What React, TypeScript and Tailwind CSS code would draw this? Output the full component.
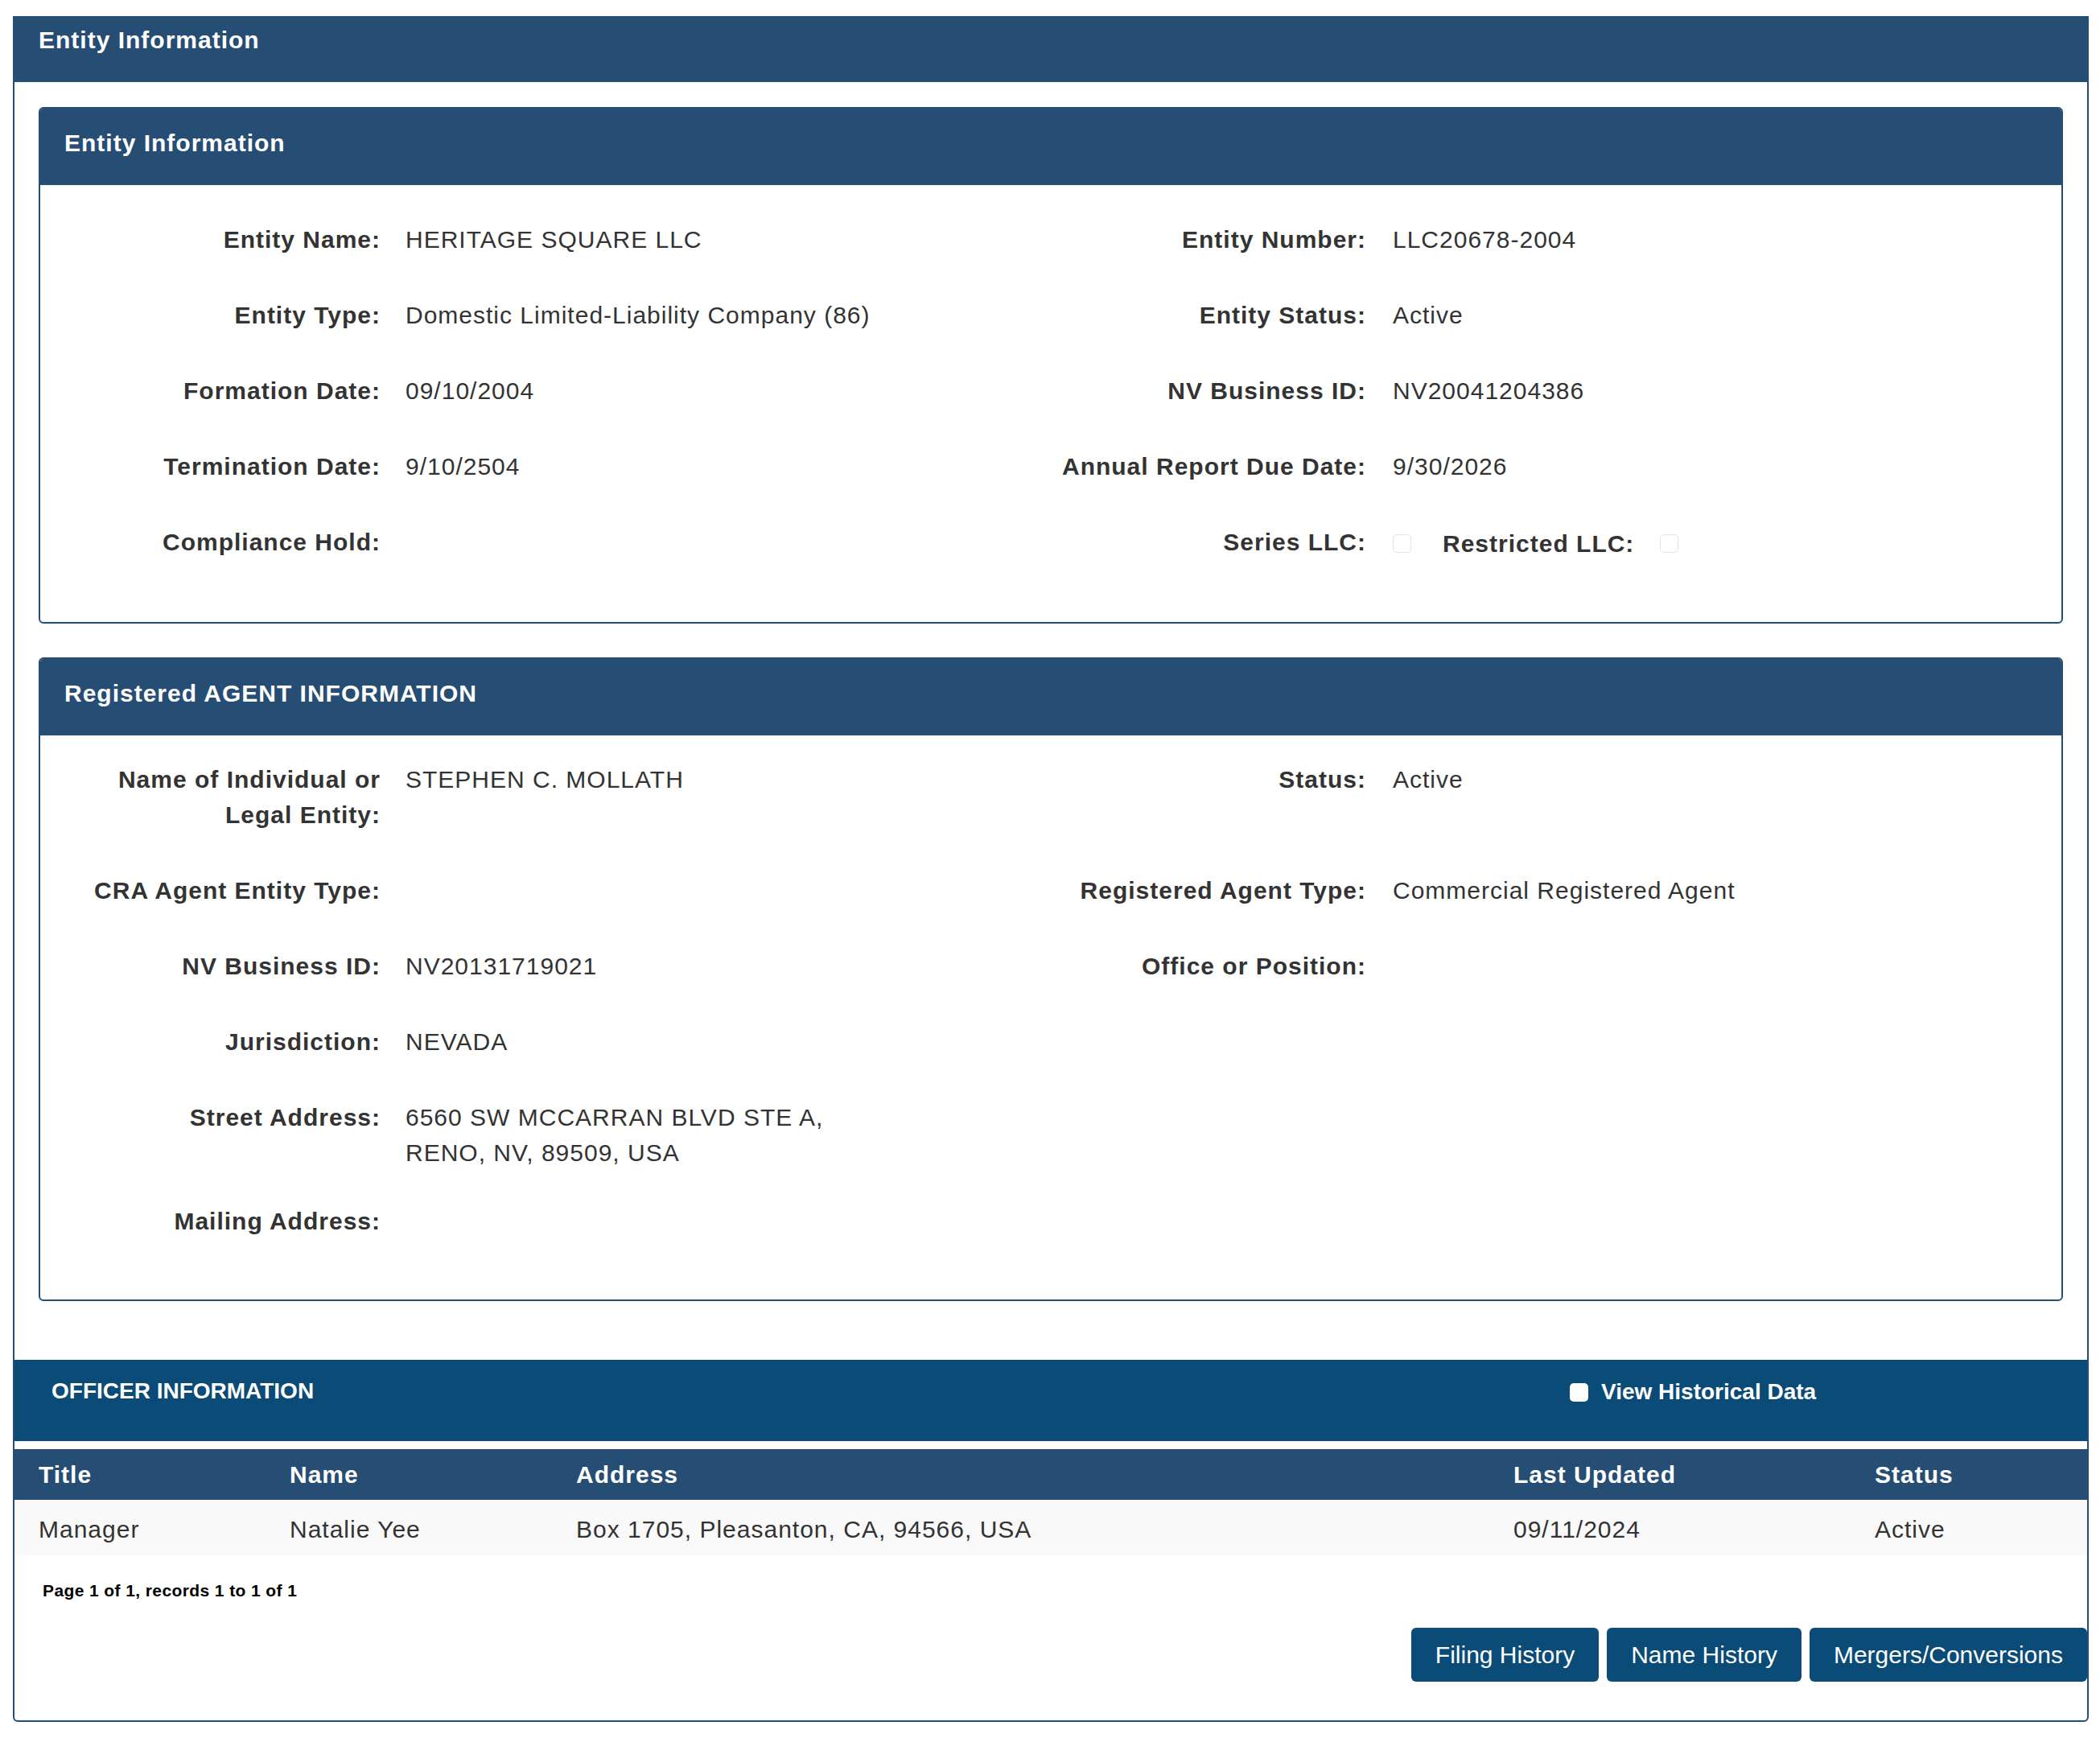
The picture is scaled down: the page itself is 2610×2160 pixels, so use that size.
import React from 'react'

const navy = 'bg-[#264d73]'

function Box() {
  return <span className="inline-block w-[23px] h-[23px] rounded-[5px] border border-[#e3e3e3] bg-white align-middle" />
}

function Row({
  l1,
  v1,
  l2,
  v2,
  className = '',
}: {
  l1?: React.ReactNode
  v1?: React.ReactNode
  l2?: React.ReactNode
  v2?: React.ReactNode
  className?: string
}) {
  return (
    <div className={`grid grid-cols-[454px_740px_487px_1fr] ${className}`}>
      <div className="pl-[44px] pr-[31px] text-right font-bold">{l1}</div>
      <div>{v1}</div>
      <div className="pl-[30px] pr-[33px] text-right font-bold whitespace-nowrap">{l2}</div>
      <div>{v2}</div>
    </div>
  )
}

function Card({ title, children, bodyClass }: { title: string; children: React.ReactNode; bodyClass: string }) {
  return (
    <div className="border-2 border-[#264d73] rounded-[6px] overflow-hidden">
      <div className={`${navy} h-[95px] pt-[20px] px-[30px] text-white font-bold leading-[45px]`}>{title}</div>
      <div className={bodyClass}>{children}</div>
    </div>
  )
}

export default function App() {
  return (
    <div className="min-h-screen bg-white pt-[20px] pl-[16px] text-[30px] leading-[44px] tracking-[1px] text-[#333] font-['Liberation_Sans',Arial,sans-serif]">
      <div className="w-[2580px] border-2 border-[#264d73] rounded-b-[6px]">
        <div className={`${navy} h-[80px] pt-[5px] px-[30px] text-white font-bold leading-[45px]`}>Entity Information</div>

        <div className="px-[30px] pt-[31px] pb-[73px]">
          <Card title="Entity Information" bodyClass="pt-[46px] pb-[77px] flex flex-col gap-[50px]">
            <Row l1="Entity Name:" v1="HERITAGE SQUARE LLC" l2="Entity Number:" v2="LLC20678-2004" />
            <Row l1="Entity Type:" v1="Domestic Limited-Liability Company (86)" l2="Entity Status:" v2="Active" />
            <Row l1="Formation Date:" v1="09/10/2004" l2="NV Business ID:" v2="NV20041204386" />
            <Row l1="Termination Date:" v1="9/10/2504" l2="Annual Report Due Date:" v2="9/30/2026" />
            <Row
              l1="Compliance Hold:"
              l2="Series LLC:"
              v2={
                <div className="flex items-center h-[44px] pt-[3px]">
                  <Box />
                  <span className="ml-[39px] mr-[32px] font-bold">Restricted LLC:</span>
                  <Box />
                </div>
              }
            />
          </Card>

          <div className="mt-[42px]">
            <Card title="Registered AGENT INFORMATION" bodyClass="pt-[33px] pb-[75px] flex flex-col">
              <Row l1="Name of Individual or Legal Entity:" v1="STEPHEN C. MOLLATH" l2="Status:" v2="Active" />
              <Row className="mt-[50px]" l1="CRA Agent Entity Type:" l2="Registered Agent Type:" v2="Commercial Registered Agent" />
              <Row className="mt-[50px]" l1="NV Business ID:" v1="NV20131719021" l2="Office or Position:" />
              <Row className="mt-[50px]" l1="Jurisdiction:" v1="NEVADA" />
              <Row
                className="mt-[50px]"
                l1="Street Address:"
                v1={
                  <>
                    6560 SW MCCARRAN BLVD STE A,
                    <br />
                    RENO, NV, 89509, USA
                  </>
                }
              />
              <Row className="mt-[41px]" l1="Mailing Address:" />
            </Card>
          </div>
        </div>

        <div className="h-[101px] bg-[#0a4b78] pt-[17px] flex text-white font-bold text-[28px] tracking-normal">
          <div className="w-[1933px] pl-[46px]">OFFICER INFORMATION</div>
          <div className="flex items-center h-[44px] pt-[2px]">
            <span className="w-[23px] h-[23px] rounded-[5px] bg-white" />
            <span className="ml-[16px]">View Historical Data</span>
          </div>
        </div>

        <div className="mt-[10px]">
          <div className={`grid grid-cols-[312px_356px_1165px_449px_1fr] h-[63px] items-center ${navy} text-white font-bold`}>
            <div className="pl-[30px]">Title</div>
            <div className="pl-[30px]">Name</div>
            <div className="pl-[30px]">Address</div>
            <div className="pl-[30px]">Last Updated</div>
            <div className="pl-[30px]">Status</div>
          </div>
          <div className="grid grid-cols-[312px_356px_1165px_449px_1fr] h-[69px] pt-[4px] items-center bg-[#f9f9f9]">
            <div className="pl-[30px]">Manager</div>
            <div className="pl-[30px]">Natalie Yee</div>
            <div className="pl-[30px]">Box 1705, Pleasanton, CA, 94566, USA</div>
            <div className="pl-[30px]">09/11/2024</div>
            <div className="pl-[30px]">Active</div>
          </div>
        </div>

        <div className="mt-[29px] pl-[35px] text-[21px] leading-[30px] tracking-[0.4px] font-bold text-black">Page 1 of 1, records 1 to 1 of 1</div>

        <div className="mt-[31px] pb-[48px] flex justify-end gap-[10px] tracking-normal">
          {['Filing History', 'Name History', 'Mergers/Conversions'].map((b) => (
            <button key={b} className="h-[67px] px-[30px] rounded-[6px] bg-[#0a4b78] text-white text-[30px]">
              {b}
            </button>
          ))}
        </div>
      </div>
    </div>
  )
}
